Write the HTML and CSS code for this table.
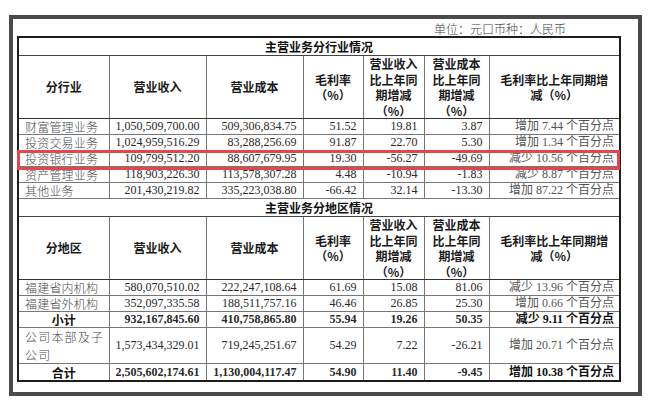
FILE: index.html
```html
<!DOCTYPE html>
<html lang="zh-CN">
<head>
<meta charset="utf-8">
<link rel="stylesheet" href="styles.css">
</head>
<body>
<div class="frame">
  <div class="unit">单位：元口币种：人民币</div>
  <table class="report">
    <colgroup>
      <col class="c1"><col class="c2"><col class="c3"><col class="c4"><col class="c5"><col class="c6"><col class="c7">
    </colgroup>
    <tr class="title"><td colspan="7">主营业务分行业情况</td></tr>
    <tr class="head">
      <td>分行业</td><td>营业收入</td><td>营业成本</td><td>毛利率<br>（%）</td>
      <td>营业收入<br>比上年同<br>期增减<br>（%）</td>
      <td>营业成本<br>比上年同<br>期增减<br>（%）</td>
      <td>毛利率比上年同期增<br>减（%）</td>
    </tr>
    <tr class="row"><td class="name">财富管理业务</td><td class="num">1,050,509,700.00</td><td class="num">509,306,834.75</td><td class="num">51.52</td><td class="num">19.81</td><td class="num">3.87</td><td class="chg">增加 7.44 个百分点</td></tr>
    <tr class="row"><td class="name">投资交易业务</td><td class="num">1,024,959,516.29</td><td class="num">83,288,256.69</td><td class="num">91.87</td><td class="num">22.70</td><td class="num">5.30</td><td class="chg">增加 1.34 个百分点</td></tr>
    <tr class="row"><td class="name">投资银行业务</td><td class="num">109,799,512.20</td><td class="num">88,607,679.95</td><td class="num">19.30</td><td class="num">-56.27</td><td class="num">-49.69</td><td class="chg">减少 10.56 个百分点</td></tr>
    <tr class="row"><td class="name">资产管理业务</td><td class="num">118,903,226.30</td><td class="num">113,578,307.28</td><td class="num">4.48</td><td class="num">-10.94</td><td class="num">-1.83</td><td class="chg">减少 8.87 个百分点</td></tr>
    <tr class="row"><td class="name">其他业务</td><td class="num">201,430,219.82</td><td class="num">335,223,038.80</td><td class="num">-66.42</td><td class="num">32.14</td><td class="num">-13.30</td><td class="chg">增加 87.22 个百分点</td></tr>
    <tr class="title title2"><td colspan="7">主营业务分地区情况</td></tr>
    <tr class="head head2">
      <td>分地区</td><td>营业收入</td><td>营业成本</td><td>毛利率<br>（%）</td>
      <td>营业收入<br>比上年同<br>期增减<br>（%）</td>
      <td>营业成本<br>比上年同<br>期增减<br>（%）</td>
      <td>毛利率比上年同期增<br>减（%）</td>
    </tr>
    <tr class="row"><td class="name">福建省内机构</td><td class="num">580,070,510.02</td><td class="num">222,247,108.64</td><td class="num">61.69</td><td class="num">15.08</td><td class="num">81.06</td><td class="chg">减少 13.96 个百分点</td></tr>
    <tr class="row"><td class="name">福建省外机构</td><td class="num">352,097,335.58</td><td class="num">188,511,757.16</td><td class="num">46.46</td><td class="num">26.85</td><td class="num">25.30</td><td class="chg">增加 0.66 个百分点</td></tr>
    <tr class="row total"><td class="label">小计</td><td class="num">932,167,845.60</td><td class="num">410,758,865.80</td><td class="num">55.94</td><td class="num">19.26</td><td class="num">50.35</td><td class="chg">减少 9.11 个百分点</td></tr>
    <tr class="row tall"><td class="name spaced"><span class="line">公司本部及子</span><span class="line">公司</span></td><td class="num">1,573,434,329.01</td><td class="num">719,245,251.67</td><td class="num">54.29</td><td class="num">7.22</td><td class="num">-26.21</td><td class="chg">增加 20.71 个百分点</td></tr>
    <tr class="row total last"><td class="label">合计</td><td class="num">2,505,602,174.61</td><td class="num">1,130,004,117.47</td><td class="num">54.90</td><td class="num">11.40</td><td class="num">-9.45</td><td class="chg">增加 10.38 个百分点</td></tr>
  </table>
  <div class="highlight"></div>
</div>
</body>
</html>
```
FILE: styles.css
```css
html, body {
  margin: 0;
  padding: 0;
  background: #ffffff;
}

body {
  font-family: "Liberation Serif", "Noto Sans CJK SC", serif;
  color: #222;
}

.frame {
  position: relative;
  box-sizing: border-box;
  width: 633px;
  height: 381px;
  margin: 15px 0 0 9px;
  border: 4px solid #4b4b4b;
  padding: 0 19px 0 4px;
  background: #fff;
}

.unit {
  height: 17px;
  line-height: 19px;
  font-size: 12px;
  text-align: right;
  padding-right: 53px;
  color: #444;
  font-family: "Noto Sans CJK SC", sans-serif;
  font-weight: 300;
}

.report {
  width: 602px;
  table-layout: fixed;
  border-collapse: collapse;
  border: 2px solid #1e1e1e;
  font-size: 12px;
}

.c1 { width: 91px; }
.c2 { width: 97px; }
.c3 { width: 97px; }
.c4 { width: 60px; }
.c5 { width: 61px; }
.c6 { width: 65px; }
.c7 { width: 131px; }

.report td {
  border: 1px solid #777;
  padding: 0 5px;
  white-space: nowrap;
  overflow: hidden;
}

.title td {
  height: 17px;
  line-height: 17px;
  text-align: center;
  font-family: "Noto Sans CJK SC", sans-serif;
  font-weight: 700;
  color: #111;
  border-color: #444;
}

.title2 td {
  height: 17px;
}

.head td {
  height: 61px;
  line-height: 15.5px;
  text-align: center;
  vertical-align: middle;
  font-family: "Noto Sans CJK SC", sans-serif;
  font-weight: 700;
  color: #1a1a1a;
  border-bottom-color: #333;
}

.head2 td {
  height: 61px;
}

.row td {
  height: 15px;
  line-height: 15px;
}

.row .name {
  text-align: left;
  padding-left: 6px;
  font-family: "Noto Sans CJK SC", sans-serif;
  font-weight: 300;
  color: #4a4a4a;
  letter-spacing: 0.2px;
}

.row .num {
  text-align: right;
  font-family: "Liberation Serif", serif;
  color: #2a2a2a;
  padding-right: 6px;
}

.row .chg {
  text-align: right;
  font-family: "Liberation Serif", "Noto Sans CJK SC", serif;
  color: #555;
  padding-right: 5px;
}

.row .label {
  text-align: center;
  font-family: "Noto Sans CJK SC", sans-serif;
  font-weight: 700;
  color: #111;
}

.total td {
  font-weight: 700;
  color: #111;
}

.total .chg {
  color: #111;
}

.tall td {
  height: 34px;
  line-height: 15px;
}

.row .spaced {
  letter-spacing: 1.2px;
  line-height: 12px;
}

.spaced .line {
  display: block;
  height: 17.5px;
  line-height: 17.5px;
  font-size: 12px;
}

.last td {
  height: 16px;
}

.highlight {
  position: absolute;
  left: 4px;
  top: 131px;
  width: 597px;
  height: 14px;
  border: 3px solid #e2474c;
  pointer-events: none;
}
```
